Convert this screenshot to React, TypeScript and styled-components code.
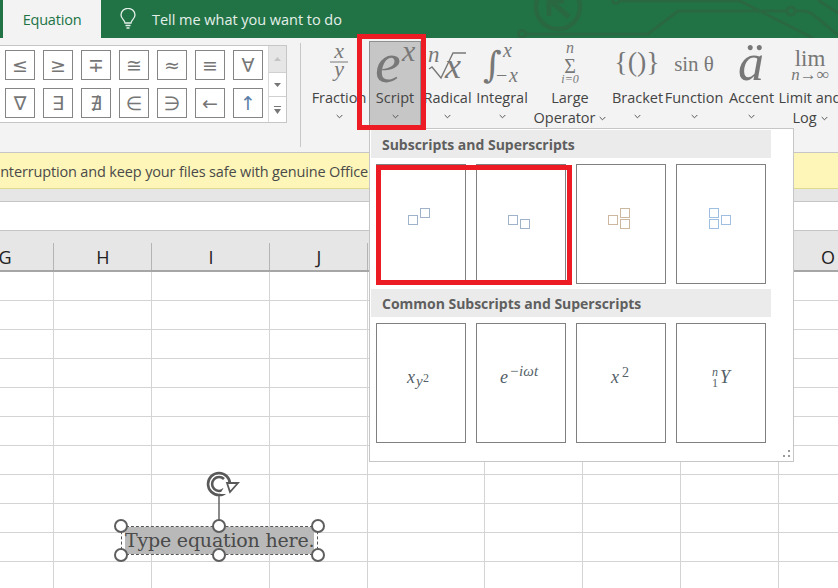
import React from "react";
import styled, { createGlobalStyle } from "styled-components";

const Global = createGlobalStyle`
  html, body { margin: 0; padding: 0; background: #fff; }
  body { width: 838px; height: 588px; overflow: hidden; font-family: "Open Sans", "Noto Sans", sans-serif; }
  * { box-sizing: border-box; }
`;

const Page = styled.div`
  position: relative;
  width: 838px;
  height: 588px;
  overflow: hidden;
  display: flex;
  flex-direction: column;
`;

const TitleBar = styled.div`
  position: relative;
  height: 38px;
  flex: none;
  background: #217346;
  display: flex;
  align-items: stretch;
  padding-left: 3px;
  color: #e4efe9;
`;
const Circuit = styled.svg`
  position: absolute;
  left: 0;
  top: 0;
`;
const Tab = styled.div`
  width: 98px;
  background: #f3f3f3;
  color: #217346;
  font-size: 14.5px;
  letter-spacing: -0.2px;
  display: flex;
  align-items: center;
  justify-content: center;
  position: relative;
`;
const TellMe = styled.div`
  display: flex;
  align-items: center;
  gap: 16px;
  margin-left: 19px;
  font-size: 14.5px;
  letter-spacing: -0.03px;
  position: relative;
`;

const Ribbon = styled.div`
  height: 115px;
  flex: none;
  background: #f3f3f3;
  border-bottom: 1px solid #c6c6c6;
  display: flex;
  align-items: flex-start;
`;
const Gallery = styled.div`
  margin-top: 7px;
  width: 287px;
  height: 78px;
  display: flex;
  background: #fff;
  border: 1px solid #c6c6c6;
  border-left: none;
`;
const SymbolGrid = styled.div`
  width: 268px;
  padding: 4px 0 0 5px;
  display: grid;
  grid-template-columns: repeat(7, 30px);
  grid-auto-rows: 30px;
  gap: 8px;
`;
const SymbolTile = styled.div<{ $blue?: boolean }>`
  border: 1px solid #858585;
  background: #fff;
  display: flex;
  align-items: center;
  justify-content: center;
  color: ${(p) => (p.$blue ? "#5b7fa8" : "#767676")};
  font: 19px "DejaVu Sans", sans-serif;
`;
const ScrollColumn = styled.div`
  width: 18px;
  display: flex;
  flex-direction: column;
  border-left: 1px solid #d8d8d8;
`;
const ScrollButton = styled.div<{ $h: number; $off?: boolean }>`
  height: ${(p) => p.$h}px;
  flex: none;
  display: flex;
  align-items: center;
  justify-content: center;
  background: ${(p) => (p.$off ? "#e6e6e6" : "#fff")};
  & + & { border-top: 1px solid #d0d0d0; }
`;
const Separator = styled.div`
  width: 1px;
  height: 104px;
  margin: 5px 8px 0 13px;
  background: #c6c6c6;
  flex: none;
`;
const Commands = styled.div`
  display: flex;
  height: 100%;
  align-items: flex-start;
`;
const Command = styled.div<{ $w: number; $active?: boolean }>`
  width: ${(p) => p.$w}px;
  flex: none;
  height: ${(p) => (p.$active ? "87px" : "90px")};
  margin-top: 3px;
  display: flex;
  flex-direction: column;
  align-items: center;
  background: ${(p) => (p.$active ? "#c6c6c6" : "transparent")};
  box-shadow: ${(p) => (p.$active ? "inset 0 0 0 1px #8f8f8f" : "none")};
  color: #444;
  font-size: 14.5px;
  line-height: 20px;
  letter-spacing: -0.02px;
  white-space: nowrap;
`;
const IconSlot = styled.svg`
  flex: none;
  display: block;
  overflow: visible;
`;
const CommandLabel = styled.div`
  margin-top: 1px;
  height: 20px;
  display: flex;
  align-items: center;
  gap: 4px;
  & + & { margin-top: 0; }
`;
const ChevronRow = styled.div`
  height: 16px;
  display: flex;
  align-items: center;
`;

const Notice = styled.div`
  height: 36px;
  flex: none;
  background: #fdf6b8;
  border-bottom: 1px solid #e0da8e;
  color: #4a4a4a;
  font-size: 14.5px;
  letter-spacing: -0.15px;
  display: flex;
  align-items: center;
  padding-top: 1px;
`;
const NoticeText = styled.div`
  width: 368px;
  overflow: hidden;
  display: flex;
  justify-content: flex-end;
  white-space: nowrap;
`;
const GreyStrip = styled.div`
  height: 13px;
  flex: none;
  background: #e6e6e6;
  border-bottom: 1px solid #c6c6c6;
`;
const FormulaBar = styled.div`
  height: 29px;
  flex: none;
  background: #fff;
  border-bottom: 1px solid #c6c6c6;
`;

const Sheet = styled.div`
  flex: 1;
  position: relative;
  display: flex;
  margin-left: -44px;
`;
const Column = styled.div<{ $w: number }>`
  width: ${(p) => p.$w}px;
  flex: none;
  display: flex;
  flex-direction: column;
`;
const ColumnHead = styled.div`
  height: 41px;
  flex: none;
  background: #e6e6e6;
  border-bottom: 2px solid #a6a6a6;
  display: flex;
  align-items: flex-end;
  justify-content: center;
  position: relative;
  color: #222;
  font-size: 18px;
  line-height: 25px;
  &::after {
    content: "";
    position: absolute;
    right: 0;
    top: 12px;
    bottom: 0;
    width: 1px;
    background: #b4b4b4;
  }
`;
const Cells = styled.div`
  flex: 1;
  border-right: 1px solid #d4d4d4;
  background: repeating-linear-gradient(to bottom, #fff 0, #fff 28px, #d4d4d4 28px, #d4d4d4 29px);
`;

const Highlight = styled.div<{ $x: number; $y: number; $w: number; $h: number }>`
  position: absolute;
  left: ${(p) => p.$x}px;
  top: ${(p) => p.$y}px;
  width: ${(p) => p.$w}px;
  height: ${(p) => p.$h}px;
  border: 5px solid #ed1c24;
  pointer-events: none;
`;

const Menu = styled.div`
  position: absolute;
  left: 369px;
  top: 128px;
  width: 425px;
  height: 334px;
  background: #fff;
  border: 1px solid #c6c6c6;
  padding: 1px 22px 0 1px;
  display: flex;
  flex-direction: column;
`;
const MenuHead = styled.div`
  height: 28px;
  flex: none;
  background: #ebebeb;
  color: #5f5f5f;
  font-size: 14px;
  font-weight: 700;
  letter-spacing: -0.02px;
  padding-left: 11px;
  display: flex;
  align-items: center;
`;
const MenuGrid = styled.div`
  display: grid;
  grid-template-columns: repeat(4, 90px);
  gap: 10px;
  padding: 6px 0 5px 5px;
`;
const OptionTile = styled.div`
  height: 120px;
  border: 1px solid #808080;
  background: #fff;
  display: flex;
`;
const TileGraphic = styled.svg`
  display: block;
  flex: none;
`;
const Grip = styled.svg`
  position: absolute;
  right: 2px;
  bottom: 2px;
`;

const EquationBox = styled.div`
  position: absolute;
  left: 121px;
  top: 526px;
  width: 197px;
  height: 29px;
  border: 1px dashed #555;
  display: flex;
  align-items: center;
  justify-content: center;
`;
const EquationText = styled.div`
  background: #b9b9b9;
  color: #4a4a4a;
  font: 19px/27px "DejaVu Serif", serif;
  letter-spacing: -0.2px;
  width: 189px;
  height: 27px;
  white-space: nowrap;
  text-align: center;
`;
const Handle = styled.div<{ $x: number; $y: number }>`
  position: absolute;
  left: ${(p) => p.$x - 7}px;
  top: ${(p) => p.$y - 7}px;
  width: 14px;
  height: 14px;
  border-radius: 50%;
  background: #fff;
  border: 2px solid #5e5e5e;
`;
const RotateGraphic = styled.svg`
  position: absolute;
  left: 204px;
  top: 470px;
`;

const Chevron = () => (
  <svg width="7" height="5" viewBox="0 0 7 5">
    <path d="M0.7 1 L3.5 3.8 L6.3 1" fill="none" stroke="#555" strokeWidth="1" />
  </svg>
);

const Serif = "Liberation Serif, serif";
const GREY = "#787878";

type T = { x: number; y: number; s: number; i?: boolean; f?: string; a?: "middle" | "start"; c: string };
const mt = ({ x, y, s, i, f, a, c }: T, k: number) => (
  <text key={k} x={x} y={y} fontSize={s} fontStyle={i ? "italic" : "normal"} fontFamily={f || Serif} textAnchor={a || "start"} fill={GREY}>
    {c}
  </text>
);

const iconText: Record<string, T[]> = {
  fraction: [
    { x: 30, y: 17, s: 22, i: true, a: "middle", c: "x" },
    { x: 30, y: 35, s: 22, i: true, a: "middle", c: "y" },
  ],
  script: [
    { x: 6, y: 41, s: 58, i: true, c: "e" },
    { x: 33, y: 20, s: 30, i: true, c: "x" },
  ],
  radical: [
    { x: 7, y: 21, s: 23, i: true, c: "n" },
    { x: 24, y: 37, s: 36, i: true, c: "x" },
  ],
  integral: [
    { x: 9, y: 36, s: 36, f: "DejaVu Serif, serif", c: "∫" },
    { x: 29, y: 16, s: 20, i: true, c: "x" },
    { x: 22, y: 41, s: 20, c: "−" },
    { x: 35, y: 41, s: 20, i: true, c: "x" },
  ],
  large: [
    { x: 40, y: 12, s: 16, i: true, a: "middle", c: "n" },
    { x: 40, y: 32, s: 20, a: "middle", c: "Σ" },
    { x: 40, y: 42, s: 12, a: "middle", i: true, c: "i=0" },
  ],
  bracket: [{ x: 27, y: 30, s: 28, a: "middle", c: "{()}" }],
  func: [{ x: 29, y: 30, s: 21, a: "middle", c: "sin θ" }],
  accent: [{ x: 28, y: 39, s: 52, i: true, a: "middle", c: "ä" }],
  limit: [
    { x: 30, y: 25, s: 23, a: "middle", c: "lim" },
    { x: 30, y: 39, s: 17, i: true, a: "middle", c: "n→∞" },
  ],
};

const MathIcon = ({ name, w }: { name: string; w: number }) => (
  <IconSlot width={w} height={46} viewBox={`0 0 ${w} 46`}>
    {iconText[name].map(mt)}
    {name === "fraction" && <line x1={w / 2 - 9} x2={w / 2 + 9} y1="21" y2="21" stroke={GREY} />}
    {name === "radical" && (
      <path d="M8 28 L11 26 L20 37 L32 12 L45 12" fill="none" stroke={GREY} strokeWidth="1.4" />
    )}
  </IconSlot>
);

const Placeholders = ({ boxes, c }: { boxes: [number, number][]; c: string }) => (
  <TileGraphic width="88" height="118" viewBox="0 0 88 118">
    {boxes.map(([x, y], i) => (
      <rect key={i} x={x + 0.5} y={y + 0.5} width={9} height={9} fill="none" stroke={c} strokeWidth="1" strokeDasharray="1 1" />
    ))}
  </TileGraphic>
);

const mathFont = "Liberation Serif, serif";
const MathText = ({ parts }: { parts: [number, number, number, string, boolean][] }) => (
  <TileGraphic width="88" height="118" viewBox="0 0 88 118">
    {parts.map(([x, y, s, c, i], k) => (
      <text key={k} x={x} y={y} fontSize={s} fontStyle={i ? "italic" : "normal"} fontFamily={mathFont} fill="#555f68">
        {c}
      </text>
    ))}
  </TileGraphic>
);

const symbols1 = ["≤", "≥", "∓", "≅", "≈", "≡", "∀"];
const symbols2 = ["∇", "∃", "∄", "∈", "∋", "←", "↑"];

const commands = [
  { w: 60, icon: "fraction", label: "Fraction" },
  { w: 52, icon: "script", label: "Script", active: true },
  { w: 53, icon: "radical", label: "Radical" },
  { w: 56, icon: "integral", label: "Integral" },
  { w: 80, icon: "large", label: "Large", second: "Operator" },
  { w: 55, icon: "bracket", label: "Bracket" },
  { w: 58, icon: "func", label: "Function" },
  { w: 57, icon: "accent", label: "Accent" },
  { w: 60, icon: "limit", label: "Limit and", second: "Log" },
];

const columns: [string, number][] = [
  ["G", 98], ["H", 98], ["I", 118], ["J", 98], ["", 117], ["", 98], ["", 98], ["", 98], ["O", 98],
];

export default function App() {
  return (
    <Page>
      <Global />
      <TitleBar>
        <Circuit width="838" height="38" viewBox="0 0 838 38" fill="none" stroke="#2a6842" strokeWidth="3">
          <circle cx="558" cy="7" r="22" strokeWidth="4.5" />
          <path d="M569 17 L553 3 M549 16 L549 1 L564 1" strokeWidth="5" />
          <circle cx="522" cy="34" r="3.5" />
          <path d="M525 34 L648 34 L678 11 L787 11" />
          <circle cx="791" cy="11" r="4" />
          <path d="M795 11 L803 11 Q810 11 816 17 L838 35" />
          <circle cx="616" cy="0" r="3.5" />
          <path d="M619 1 L740 1 L813 38" />
          <path d="M818 0 L838 13" />
        </Circuit>
        <Tab>Equation</Tab>
        <TellMe>
          <svg width="16" height="22" viewBox="0 0 16 22" fill="none" stroke="#e4efe9" strokeWidth="1.3">
            <path d="M5 15 C5 12 1 11 1 7 A7 6.6 0 0 1 15 7 C15 11 11 12 11 15 Z" />
            <path d="M5.5 17.5 H10.5 M6.5 20 H9.5" />
          </svg>
          Tell me what you want to do
        </TellMe>
      </TitleBar>
      <Ribbon>
        <Gallery>
          <SymbolGrid>
            {symbols1.map((s) => (
              <SymbolTile key={s}>{s}</SymbolTile>
            ))}
            {symbols2.map((s) => (
              <SymbolTile key={s} $blue={s === "↑"}>
                {s}
              </SymbolTile>
            ))}
          </SymbolGrid>
          <ScrollColumn>
            <ScrollButton $h={26} $off>
              <svg width="7" height="4" viewBox="0 0 7 4"><path d="M0 4 L3.5 0 L7 4 Z" fill="#c4c4c4" /></svg>
            </ScrollButton>
            <ScrollButton $h={24}>
              <svg width="7" height="4" viewBox="0 0 7 4"><path d="M0 0 L3.5 4 L7 0 Z" fill="#777" /></svg>
            </ScrollButton>
            <ScrollButton $h={26}>
              <svg width="7" height="8" viewBox="0 0 7 8"><path d="M0 0 H7 V1 H0 Z M0 3 L3.5 8 L7 3 Z" fill="#777" /></svg>
            </ScrollButton>
          </ScrollColumn>
        </Gallery>
        <Separator />
        <Commands>
          {commands.map((c) => (
            <Command key={c.label} $w={c.w} $active={c.active}>
              <MathIcon name={c.icon} w={c.w} />
              <CommandLabel>{c.label}</CommandLabel>
              {c.second ? (
                <CommandLabel>
                  {c.second} <Chevron />
                </CommandLabel>
              ) : (
                <ChevronRow>
                  <Chevron />
                </ChevronRow>
              )}
            </Command>
          ))}
        </Commands>
      </Ribbon>
      <Notice>
        <NoticeText>To use Office without interruption and keep your files safe with genuine Office</NoticeText>
      </Notice>
      <GreyStrip />
      <FormulaBar />
      <Sheet>
        {columns.map(([name, w], i) => (
          <Column key={i} $w={w}>
            <ColumnHead>{name}</ColumnHead>
            <Cells />
          </Column>
        ))}
      </Sheet>

      <Menu>
        <MenuHead>Subscripts and Superscripts</MenuHead>
        <MenuGrid>
          <OptionTile><Placeholders c="#3f6494" boxes={[[31, 50], [43, 43]]} /></OptionTile>
          <OptionTile><Placeholders c="#3f6494" boxes={[[31, 50], [43, 54]]} /></OptionTile>
          <OptionTile><Placeholders c="#96703f" boxes={[[31, 50], [43, 43], [43, 54]]} /></OptionTile>
          <OptionTile><Placeholders c="#3f7fc4" boxes={[[32, 43], [32, 54], [44, 50]]} /></OptionTile>
        </MenuGrid>
        <MenuHead>Common Subscripts and Superscripts</MenuHead>
        <MenuGrid>
          <OptionTile>
            <MathText parts={[[30, 59, 18, "x", true], [39, 62, 15, "y", true], [46, 58, 12, "2", false]]} />
          </OptionTile>
          <OptionTile>
            <MathText parts={[[23, 59, 18, "e", true], [32, 52, 15, "−iωt", true]]} />
          </OptionTile>
          <OptionTile>
            <MathText parts={[[34, 59, 18, "x", true], [45, 53, 14, "2", false]]} />
          </OptionTile>
          <OptionTile>
            <MathText parts={[[35, 52, 12, "n", true], [35, 63, 12, "1", false], [43, 59, 18, "Y", true]]} />
          </OptionTile>
        </MenuGrid>
        <Grip width="9" height="9" viewBox="0 0 9 9" fill="#9a9a9a">
          <rect x="6" y="0" width="2" height="2" />
          <rect x="1" y="5" width="2" height="2" />
          <rect x="6" y="5" width="2" height="2" />
        </Grip>
      </Menu>

      <Highlight $x={357} $y={34} $w={69} $h={96} />
      <Highlight $x={376} $y={165} $w={196} $h={120} />

      <RotateGraphic width="36" height="50" viewBox="0 0 36 50" fill="none" stroke="#595959">
        <circle cx="15" cy="14" r="11" strokeWidth="2.6" />
        <path d="M20 19 A7 7 0 1 1 20 9" strokeWidth="2.6" />
        <path d="M22 14 L28 24 L16 24 Z" fill="#fff" stroke="none" />
        <path d="M23 13 H34 L26 22 Z" fill="#fff" strokeWidth="1.8" />
        <line x1="15" x2="15" y1="26" y2="50" strokeWidth="1.4" />
      </RotateGraphic>
      <EquationBox>
        <EquationText>Type equation here.</EquationText>
      </EquationBox>
      {[[121, 526], [219, 526], [318, 526], [121, 555], [219, 555], [318, 555]].map(([x, y]) => (
        <Handle key={`${x}-${y}`} $x={x} $y={y} />
      ))}
    </Page>
  );
}
